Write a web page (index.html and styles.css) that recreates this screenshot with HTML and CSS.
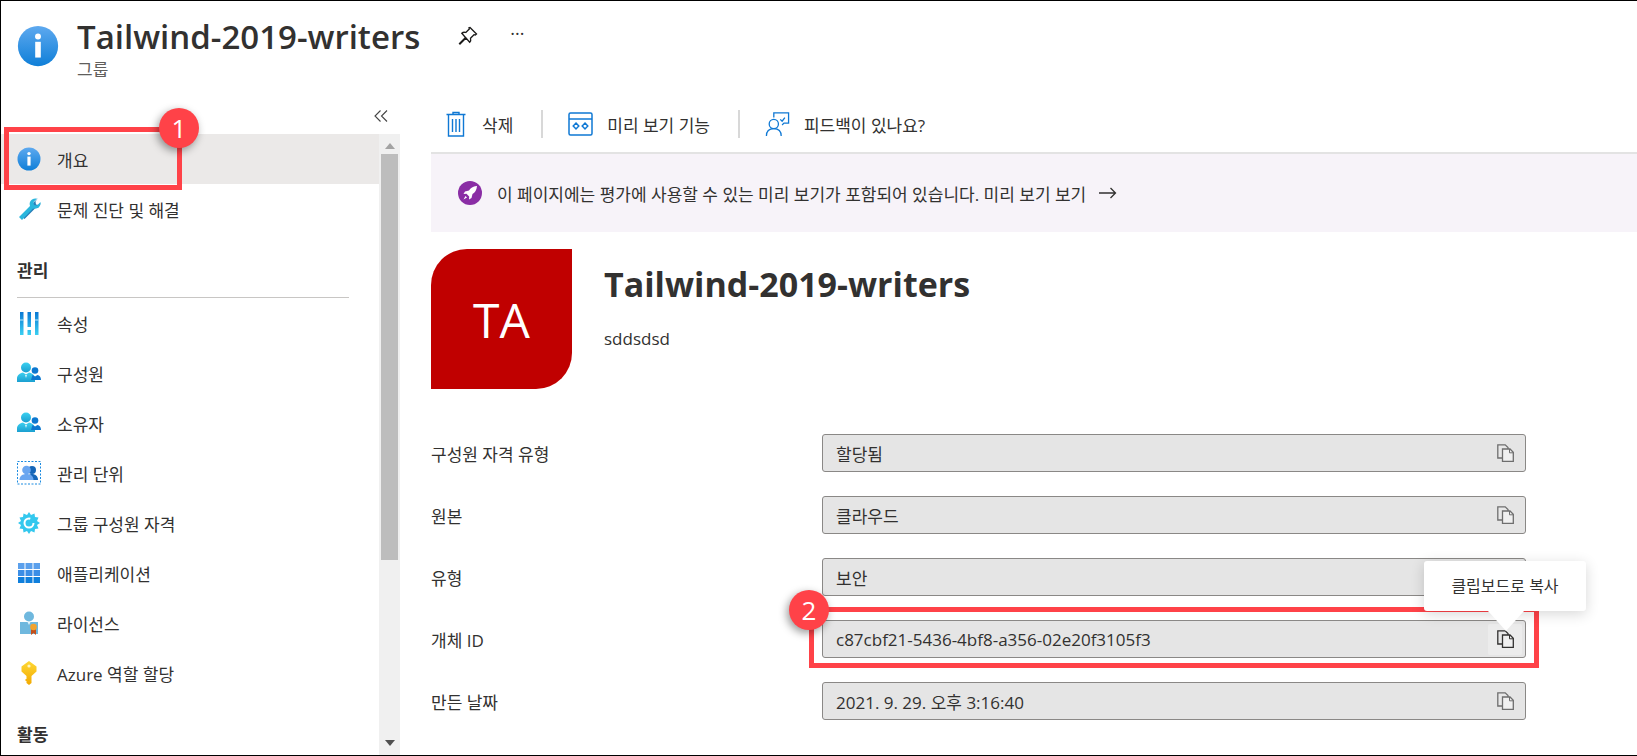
FILE: index.html
```html
<!DOCTYPE html>
<html lang="ko">
<head>
  <meta charset="UTF-8" />
  <title>Tailwind-2019-writers - 그룹</title>
  <link rel="stylesheet" href="styles.css">
</head>
<body>
  <svg class="defs" width="0" height="0" aria-hidden="true">
    <defs>
      <linearGradient id="g-info" x1="0" y1="0" x2="0" y2="1"><stop offset="0" stop-color="#5ea9ef"/><stop offset="1" stop-color="#0f7fd8"/></linearGradient>
      <linearGradient id="g-bar" x1="0" y1="0" x2="0" y2="1"><stop offset="0" stop-color="#0a78d4"/><stop offset="1" stop-color="#3cd0f2"/></linearGradient>
      <linearGradient id="g-user" x1="0" y1="0" x2="0" y2="1"><stop offset="0" stop-color="#3bd0f0"/><stop offset="1" stop-color="#1b9fd0"/></linearGradient>
      <linearGradient id="g-key" x1="0" y1="0" x2="0" y2="1"><stop offset="0" stop-color="#fed835"/><stop offset="1" stop-color="#f2a900"/></linearGradient>
      <symbol id="i-info" viewBox="0 0 24 24"><circle cx="12" cy="12" r="11.5" fill="url(#g-info)"/><circle cx="12" cy="6.6" r="1.7" fill="#fff"/><rect x="10.4" y="9.6" width="3.2" height="9" fill="#fff"/></symbol>
      <symbol id="i-users" viewBox="0 0 24 24"><circle cx="9" cy="6.5" r="5" fill="url(#g-user)"/><path d="M0 21v-3.500c0-3.500 3-5.500 6-6l3 2 3-2c3 .5 6 2.500 6 6V21z" fill="url(#g-user)"/><path d="M8 14h2l-1 3z" fill="#d8f4fb"/><circle cx="18" cy="9.500" r="3.300" fill="#0b78d0"/><path d="M14 19l1.500-5 2.500 1.500 2.500-1.500c2 .5 3.500 2 3.500 5z" fill="#0b78d0"/></symbol>
      <symbol id="i-copy" viewBox="0 0 17 18"><path d="M6 14H.8V.8h7.400L11 3.500V5" fill="#e8e8e8" stroke="currentColor" stroke-width="1.300"/><path d="M5.500 5h7.500l3.300 3.300v9H5.500z" fill="#f0f0f0" stroke="currentColor" stroke-width="1.300"/><path d="M12.500 5v3.800h3.800" fill="none" stroke="currentColor" stroke-width="1"/></symbol>
    </defs>
  </svg>

  <div class="page">
    <header class="blade-head">
      <svg class="head-icon"><use href="#i-info"/></svg>
      <div class="head-text">
        <div class="head-line">
          <h1 class="head-title">Tailwind-2019-writers</h1>
          <svg class="pin" viewBox="0 0 20 20"><path d="M12 1.500l6.500 6.500-1.200 1-1.300-.3-3.500 3.500c.5 1.700.2 3-.8 4L8 12 2 18l-.5-.5L7.500 11.500 3.800 7.300c1-1 2.300-1.300 4-.8L11.300 3 11 1.800z" fill="none" stroke="#1b1a19" stroke-width="1.300"/></svg>
          <span class="more">···</span>
        </div>
        <div class="head-sub">그룹</div>
      </div>
    </header>

    <div class="blade-body">
      <aside class="sidebar">
        <div class="collapse-row">
          <svg class="collapse" viewBox="0 0 14 12"><path d="M6.500 .5L1 6l5.500 5.500M13 .5L7.500 6l5.500 5.500" fill="none" stroke="#444" stroke-width="1.100"/></svg>
        </div>
        <div class="side-scroll">
          <nav class="nav">
            <a class="nav-item active"><svg class="nav-icon"><use href="#i-info"/></svg>개요</a>
            <a class="nav-item">
              <svg class="nav-icon" viewBox="0 0 24 24"><path d="M3 1l5 5v2.500l11 11-2.500 2.500L5.500 11H3L0 6l2 2 3-.5.500-3z" fill="#2a7fb8" transform="matrix(-1 0 0 1 24 0)"/><path d="M2 20L13 9c-1-3 0-5 2-6.500 1.500-1 3-1.300 5-1l-3.500 3.500.5 3 3 .5L23.500 5c.3 2-.2 3.700-1.500 5-1.500 1.500-3.500 2-6 1.500L5 23z" fill="#29b6dd"/></svg>
              문제 진단 및 해결
            </a>
            <h2 class="nav-section">관리</h2>
            <a class="nav-item">
              <svg class="nav-icon" viewBox="0 0 24 24"><path d="M3 1h3.500v23H3zM10.500 1H14v15h-3.500zM10.500 19H14v5h-3.500zM18 1h3.500v23H18z" fill="url(#g-bar)"/><path d="M3 8.500h3.500v1H3zM18 8.500h3.500v1H18z" fill="#bfeafc"/></svg>
              속성
            </a>
            <a class="nav-item"><svg class="nav-icon"><use href="#i-users"/></svg>구성원</a>
            <a class="nav-item"><svg class="nav-icon"><use href="#i-users"/></svg>소유자</a>
            <a class="nav-item">
              <svg class="nav-icon" viewBox="0 0 24 24"><rect x=".5" y=".5" width="23" height="22.500" fill="none" stroke="#1b8be0" stroke-dasharray="2 1.500"/><circle cx="15" cy="9" r="4" fill="#1666b8"/><path d="M10 19c0-4 2-6 5-6s6 2 6 6z" fill="#1666b8"/><circle cx="9.500" cy="9" r="4.300" fill="#6aa6f0"/><path d="M2.500 19c0-4 3-6 7-6s7 2 7 6z" fill="#6aa6f0"/></svg>
              관리 단위
            </a>
            <a class="nav-item">
              <svg class="nav-icon" viewBox="0 0 24 24"><path d="M12 1l2 3 3.500-1.500.5 3.500 3.500.5L20 10l3 2-3 2 1.500 3.500-3.500.5-.5 3.500L14 20l-2 3-2-3-3.500 1.500L6 18l-3.500-.5L4 14l-3-2 3-2-1.500-3.500L6 6l.5-3.500L10 4z" fill="#34c8ee"/><circle cx="12" cy="12" r="4.500" fill="none" stroke="#fff" stroke-width="2" stroke-dasharray="22 6"/></svg>
              그룹 구성원 자격
            </a>
            <a class="nav-item">
              <svg class="nav-icon" viewBox="0 0 24 24">
                <path d="M1 2h6.500v6H1zM8.500 2h7v6h-7zM16.500 2H23v6h-6.500z" fill="#5ba0ec"/>
                <path d="M1 9h6.500v6H1zM8.500 9h7v6h-7zM16.500 9H23v6h-6.500z" fill="#3b8ee6"/>
                <path d="M1 16h6.500v6H1zM8.500 16h7v6h-7zM16.500 16H23v6h-6.500z" fill="#0f7fdc"/>
              </svg>
              애플리케이션
            </a>
            <a class="nav-item">
              <svg class="nav-icon" viewBox="0 0 24 24"><circle cx="12" cy="5.500" r="5" fill="#6fb8de"/><path d="M3 11h18v12H3z" fill="#6fb8de"/><path d="M10.500 11h3l-1.500 3z" fill="#e4f3fa"/><path d="M14 17h5v7l-2.500-2-2.500 2z" fill="#c4501b"/><circle cx="16.500" cy="16" r="3.300" fill="#f2a32f"/></svg>
              라이선스
            </a>
            <a class="nav-item">
              <svg class="nav-icon" viewBox="0 0 24 24"><path d="M12 0l7.500 5.500v5L14.500 15v7L12 24l-2.500-2v-2h-1v-2h1v-3L4.500 10.500v-5z" fill="url(#g-key)"/><circle cx="12" cy="5" r="1.600" fill="#fff4bf"/></svg>
              Azure 역할 할당
            </a>
            <h2 class="nav-section nav-section-last">활동</h2>
          </nav>
          <div class="scrollbar">
            <span class="arrow-up"></span>
            <span class="thumb"></span>
            <span class="arrow-down"></span>
          </div>
        </div>
      </aside>

      <main class="content">
        <div class="toolbar">
          <button class="tool">
            <svg class="tool-icon trash" viewBox="0 0 20 26"><path d="M7 3V1.500h6V3M.5 3.500h19M2.500 4v21h15V4M6.500 8v13M10 8v13M13.500 8v13" fill="none" stroke="#0f78d4" stroke-width="1.400"/></svg>
            <span>삭제</span>
          </button>
          <span class="tool-sep"></span>
          <button class="tool">
            <svg class="tool-icon" viewBox="0 0 25 24"><rect x="1" y="1" width="23" height="22" rx="1.500" fill="none" stroke="#0f78d4" stroke-width="1.500"/><path d="M1 7h23" stroke="#0f78d4" stroke-width="1.500"/><path d="M8 11l2.800 3L8 17l-2.800-3zM17 11l2.800 3-2.800 3-2.800-3z" fill="none" stroke="#0f78d4" stroke-width="1.500"/></svg>
            <span>미리 보기 기능</span>
          </button>
          <span class="tool-sep"></span>
          <button class="tool">
            <svg class="tool-icon" viewBox="0 0 26 26"><path d="M9 6V1h16v11h-5l-2 2" fill="none" stroke="#0f78d4" stroke-width="1.400"/><path d="M16 8l2 2 3-4" fill="none" stroke="#0f78d4" stroke-width="1.400"/><circle cx="9" cy="13" r="5" fill="none" stroke="#0f78d4" stroke-width="1.400"/><path d="M1 26c0-5 3-8 8-8s8 3 8 8" fill="none" stroke="#0f78d4" stroke-width="1.400"/></svg>
            <span>피드백이 있나요?</span>
          </button>
        </div>

        <div class="banner">
          <svg class="rocket" viewBox="0 0 24 24"><circle cx="12" cy="12" r="12" fill="#8a2da5"/><path d="M18.500 5c-3.500.3-6 2-7.500 4.500L7 10.500 5.500 13l3-.2 2.700 2.700-.2 3 2.500-1.500 1-4c2.500-1.500 4.200-4 4.500-8zM7.500 15l-2 3.500 3.500-2z" fill="#fff"/></svg>
          <span>이 페이지에는 평가에 사용할 수 있는 미리 보기가 포함되어 있습니다. 미리 보기 보기</span>
          <svg class="banner-arrow" viewBox="0 0 18 12"><path d="M0 6h16.500M11.500 1l5 5-5 5" fill="none" stroke="#323130" stroke-width="1.300"/></svg>
        </div>

        <section class="hero">
          <div class="avatar">TA</div>
          <div class="hero-text">
            <div class="hero-title">Tailwind-2019-writers</div>
            <div class="hero-desc">sddsdsd</div>
          </div>
        </section>

        <section class="props">
          <div class="prop">
            <label class="prop-label">구성원 자격 유형</label>
            <div class="prop-field">할당됨<svg class="copy"><use href="#i-copy"/></svg></div>
          </div>
          <div class="prop">
            <label class="prop-label">원본</label>
            <div class="prop-field">클라우드<svg class="copy"><use href="#i-copy"/></svg></div>
          </div>
          <div class="prop">
            <label class="prop-label">유형</label>
            <div class="prop-field">보안<svg class="copy"><use href="#i-copy"/></svg></div>
          </div>
          <div class="prop">
            <label class="prop-label">개체 ID</label>
            <div class="prop-field">c87cbf21-5436-4bf8-a356-02e20f3105f3<span class="copy-hover"><svg class="copy copy-dark"><use href="#i-copy"/></svg></span></div>
          </div>
          <div class="prop">
            <label class="prop-label">만든 날짜</label>
            <div class="prop-field">2021. 9. 29. 오후 3:16:40<svg class="copy"><use href="#i-copy"/></svg></div>
          </div>
        </section>
      </main>
    </div>

    <!-- 주석 표시 -->
    <div class="mark mark-one"></div>
    <div class="mark mark-two"></div>
    <div class="tooltip">클립보드로 복사</div>
    <div class="badge badge-one">1</div>
    <div class="badge badge-two">2</div>
  </div>
</body>
</html>
```

FILE: styles.css
```css
/* Reset & base */
* {
  box-sizing: border-box;
}
html, body {
  margin: 0;
  height: 756px;
  overflow: hidden;
}
body {
  font-family: "Open Sans", "Noto Sans CJK KR", sans-serif;
  font-size: 17px;
  font-weight: 400;
  color: #323130;
  background: #fff;
}
.defs {
  position: absolute;
}
.page {
  position: relative;
  height: 756px;
  border: 1px solid #000;
  border-right: 0;
  display: flex;
  flex-direction: column;
  overflow: hidden;
}

/* Header */
.blade-head {
  height: 99px;
  flex: none;
  display: flex;
  padding: 24px 0 0 16px;
}
.head-icon {
  width: 42px;
  height: 42px;
  margin-right: 18px;
  flex: none;
}
.head-text {
  margin-top: -11px;
}
.head-line {
  display: flex;
  align-items: center;
  height: 44px;
}
.head-title {
  margin: 0;
  font-size: 33px;
  font-weight: 600;
}
.pin {
  width: 20px;
  height: 20px;
  margin-left: 38px;
}
.more {
  margin-left: 32px;
  font-size: 18px;
  letter-spacing: 0;
  margin-top: -6px;
}
.head-sub {
  font-size: 17px;
  color: #605e5c;
  line-height: 24px;
}

/* Sidebar */
.blade-body {
  flex: 1;
  display: flex;
  min-height: 0;
}
.sidebar {
  width: 399px;
  flex: none;
  display: flex;
  flex-direction: column;
}
.collapse-row {
  height: 34px;
  flex: none;
  display: flex;
  justify-content: flex-end;
  padding: 10px 12px 0 0;
}
.collapse {
  width: 14px;
  height: 12px;
}
.side-scroll {
  flex: 1;
  display: flex;
  min-height: 0;
}
.nav {
  flex: 1;
  overflow: hidden;
}
.nav-item {
  display: flex;
  align-items: center;
  height: 50px;
  padding-left: 16px;
  gap: 16px;
  white-space: nowrap;
}
.nav-item.active {
  background: #ebe9e8;
}
.nav-icon {
  width: 24px;
  height: 24px;
  flex: none;
}
.nav-section {
  margin: 0 30px 0 16px;
  padding: 23px 0 13px;
  height: 64px;
  font-size: 17px;
  line-height: 28px;
  font-weight: 700;
  border-bottom: 1px solid #c8c6c4;
}
.nav-section-last {
  border-bottom: 0;
  margin-top: 0;
  padding-top: 23px;
}
.scrollbar {
  width: 21px;
  flex: none;
  background: #f0f0f0;
  display: flex;
  flex-direction: column;
  align-items: center;
  justify-content: space-between;
  padding: 9px 0;
  position: relative;
}
.arrow-up {
  border: 5px solid transparent;
  border-top: 0;
  border-bottom: 6px solid #a3a3a3;
}
.arrow-down {
  border: 5px solid transparent;
  border-bottom: 0;
  border-top: 6px solid #505050;
}
.thumb {
  width: 17px;
  height: 406px;
  background: #bdbdbd;
  margin-bottom: auto;
  margin-top: 5px;
}

/* Main */
.content {
  flex: 1;
  min-width: 0;
  padding-left: 31px;
}
.toolbar {
  height: 54px;
  border-bottom: 2px solid #e3e3e3;
  display: flex;
  align-items: center;
  padding: 0 0 4px 15px;
}
.tool {
  display: flex;
  align-items: center;
  gap: 14px;
  padding: 0;
  border: 0;
  background: none;
  font: inherit;
  color: inherit;
}
.tool-icon {
  width: 25px;
  height: 24px;
}
.tool-icon.trash {
  width: 20px;
  height: 26px;
  margin-right: 2px;
}
.tool-sep {
  width: 2px;
  height: 28px;
  background: #d8d8d8;
  margin: 0 25px 0 28px;
}
.banner {
  height: 78px;
  background: #f7f3f9;
  display: flex;
  align-items: center;
  padding-left: 27px;
  gap: 15px;
}
.rocket {
  width: 24px;
  height: 24px;
}
.banner-arrow {
  width: 18px;
  height: 12px;
  margin-left: -2px;
}
.hero {
  display: flex;
  margin-top: 17px;
}
.avatar {
  width: 141px;
  height: 140px;
  background: #c00000;
  color: #fff;
  font-size: 48px;
  display: flex;
  align-items: center;
  justify-content: center;
  border-radius: 36px 0 36px 0;
}
.hero-text {
  margin-left: 32px;
}
.hero-title {
  font-size: 34px;
  font-weight: 700;
  line-height: 46px;
  margin-top: 12px;
}
.hero-desc {
  margin-top: 18px;
  line-height: 28px;
}
.props {
  display: flex;
  flex-direction: column;
  gap: 24px;
  margin-top: 45px;
}
.prop {
  display: flex;
  align-items: center;
}
.prop-label {
  width: 391px;
  flex: none;
}
.prop-field {
  width: 704px;
  height: 38px;
  background: #e5e5e5;
  border: 1px solid #8a8886;
  border-radius: 3px;
  padding: 0 13px;
  display: flex;
  align-items: center;
  justify-content: space-between;
  position: relative;
}
.copy {
  width: 17px;
  height: 18px;
  color: #6e6e6e;
  margin-right: -2px;
}
.copy-dark {
  color: #323130;
  margin: 0;
}
.copy-hover {
  width: 34px;
  height: 31px;
  background: #ececec;
  border-radius: 2px;
  display: flex;
  align-items: center;
  justify-content: center;
  margin-right: -10px;
}

/* Annotations */
.mark {
  position: absolute;
  border: 5px solid #ff4248;
}
.mark-one {
  left: 3px;
  top: 126px;
  width: 178px;
  height: 63px;
}
.mark-two {
  left: 808px;
  top: 606px;
  width: 730px;
  height: 61px;
}
.badge {
  position: absolute;
  width: 40px;
  height: 40px;
  border-radius: 50%;
  background: #ff4248;
  color: #fff;
  font-size: 26px;
  line-height: 40px;
  text-align: center;
  box-shadow: -2px 3px 8px rgba(0,0,0,0.4);
}
.badge-one {
  left: 158px;
  top: 107px;
}
.badge-two {
  left: 788px;
  top: 589px;
}
.tooltip {
  position: absolute;
  left: 1423px;
  top: 560px;
  width: 162px;
  height: 50px;
  background: #fff;
  border-radius: 3px;
  font-size: 16px;
  line-height: 50px;
  text-align: center;
  box-shadow: 0 3px 14px rgba(0,0,0,0.16);
}
.tooltip::after {
  content: "";
  position: absolute;
  left: 64px;
  top: 50px;
  border: 18px solid transparent;
  border-bottom: 0;
  border-top: 20px solid #fff;
}
```
